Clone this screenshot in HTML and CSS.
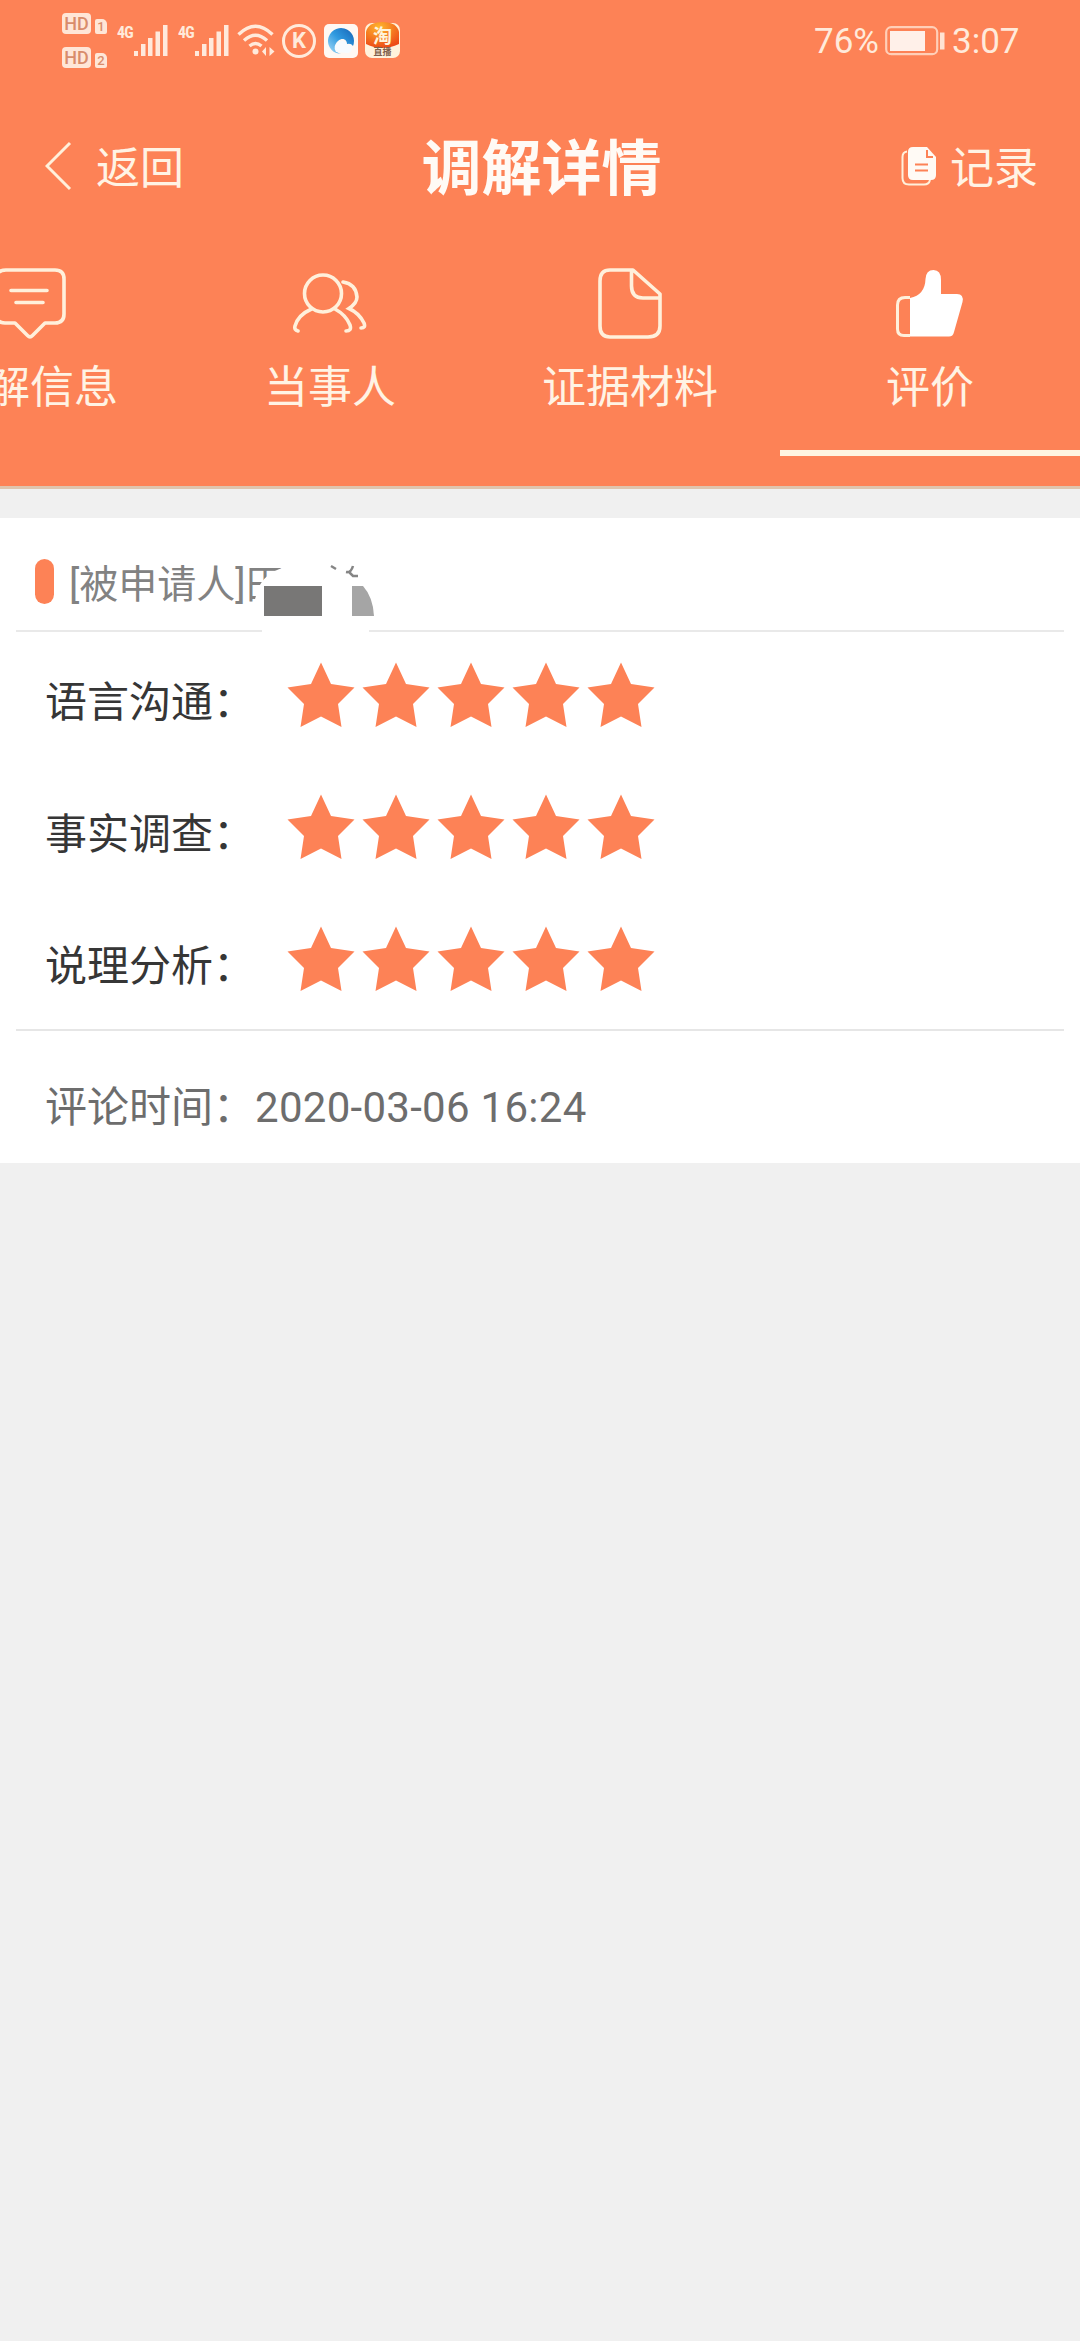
FILE: index.html
```html
<!DOCTYPE html>
<html lang="zh-CN">
<head>
<meta charset="utf-8">
<title>调解详情</title>
<link rel="stylesheet" href="styles.css">
</head>
<body>
<svg class="defs" width="0" height="0" aria-hidden="true">
  <symbol id="star" viewBox="0 0 68 66"><path d="M34 0.500 44 22 67.500 25.500 51 42 54.500 65 34 54.500 13.500 65 17 42 0.500 25.500 24 22Z"/></symbol>
  <symbol id="signal" viewBox="0 0 35 32"><path d="M0 26h4v5H0zM7 19h4.500v12H7zM14 13h4.500v18H14zM21.500 6.500h4.500v24.500h-4.500zM29 0h4.500v31H29z"/></symbol>
</svg>
<header class="header">
  <div class="status">
    <div class="hd-group">
      <div class="hd"><span class="hd-tag">HD</span><span class="sim">1</span></div>
      <div class="hd"><span class="hd-tag">HD</span><span class="sim">2</span></div>
    </div>
    <div class="net"><span class="gen">4G</span><svg class="bars"><use href="#signal"/></svg></div>
    <div class="net"><span class="gen">4G</span><svg class="bars"><use href="#signal"/></svg></div>
    <svg class="wifi" viewBox="0 0 38 32" fill="none" stroke="#ffeadb" stroke-width="3.400"><path d="M1.500 10.500Q18.500-6 35.500 10.500M7 16.500q11.500-10.500 23 0M12.500 22q6-5 12 0"/><circle cx="18.500" cy="27.500" r="3" fill="#ffeadb" stroke="none"/><path d="M29 23v9l-4-4.500zM32.500 23v9l5-4.500z" fill="#ffeadb" stroke="none"/></svg>
    <span class="k-badge">K</span>
    <svg class="app browser" viewBox="0 0 34 34"><defs><linearGradient id="bl" x1="0" y1="1" x2="1" y2="0"><stop offset="0" stop-color="#a9dcf8"/><stop offset=".5" stop-color="#2f9ae0"/><stop offset="1" stop-color="#1763b5"/></linearGradient></defs><rect width="34" height="34" rx="5" fill="#fff8f3"/><path d="M29 22A13 13 0 1 0 17 30C11 29 9 21 14 17 19 13 23 16 23 20Q27 19 29 22Z" fill="url(#bl)"/><path d="M12 28q-4-7 3-10 6-3 8 3 4-1 5 3 0 4-4 5z" fill="#f6fbff"/></svg>
    <svg class="app taobao" viewBox="0 0 35 36"><defs><radialGradient id="tb" cx=".4" cy=".2" r=".8"><stop offset="0" stop-color="#ffb62e"/><stop offset="1" stop-color="#ed4b16"/></radialGradient></defs><rect y="1" width="35" height="35" rx="7" fill="#fff2dc"/><path d="M1 22V10Q3 0 17.500 0T34 10V22Q17 30 1 22Z" fill="url(#tb)"/><text x="17.500" y="21" text-anchor="middle" class="tao">淘</text><text x="17.500" y="33" text-anchor="middle" class="tao-sub">直播</text></svg>
    <span class="percent">76%</span>
    <svg class="battery" viewBox="0 0 60 30"><rect x="1.200" y="1.200" width="51" height="27" rx="5" fill="none" stroke="#ffcfb8" stroke-width="2.200"/><rect x="5" y="5" width="35" height="20" fill="#fff0e9"/><rect x="55" y="6.500" width="4.500" height="17" fill="#ffe3d3"/></svg>
    <span class="clock">3:07</span>
  </div>
  <nav class="navbar">
    <a class="back"><svg width="27" height="50" viewBox="0 0 27 50" fill="none" stroke="#fff0db" stroke-width="3"><path d="M25 2 2 25 25 48"/></svg><span>返回</span></a>
    <h1 class="title">调解详情</h1>
    <a class="record"><svg width="36" height="40" viewBox="0 0 36 40"><path d="M6 5.500Q1.500 6 1.500 11V32Q1.500 38.500 8 38.500H23Q28 38.500 29 34" fill="none" stroke="#fff0db" stroke-width="2"/><path d="M12 1H26L35 11V29Q35 34 30 34H12Q7 34 7 29V6Q7 1 12 1Z" fill="#fffaf5"/><path d="M26 4v7h6M14 18.500h13M14 24.500h13" fill="none" stroke="#fd8256" stroke-width="2"/></svg><span>记录</span></a>
  </nav>
  <div class="tabs">
    <div class="tab"><svg class="icon" viewBox="0 0 74 74" fill="none" stroke="#fff0db" stroke-width="3.600" stroke-linejoin="round" stroke-linecap="round"><path d="M13 4H62Q71 4 71 13V48Q71 57 62 57H52L39.500 69.500Q37 72 34.500 69.500L22 57H12Q3 57 3 48V13Q3 4 13 4ZM18 24.500H54M23 36.500H50"/></svg><span>调解信息</span></div>
    <div class="tab"><svg class="icon" viewBox="0 0 74 74" fill="none" stroke="#fff0db" stroke-width="3.600" stroke-linecap="round"><circle cx="30" cy="27.500" r="18.500"/><path d="M18.500 43Q5 49 2 60Q1 64 5 65M42 43Q53 49 57 59Q59 65 53 65M50 16Q63 18 64 31Q64 37 56 42.500Q66 47 71 57Q73 62 68 62"/></svg><span>当事人</span></div>
    <div class="tab"><svg class="icon" viewBox="0 0 74 74" fill="none" stroke="#fff0db" stroke-width="3.600" stroke-linejoin="round"><path d="M40 4H17Q7 4 7 15V60Q7 71 17 71H55Q67 71 67 60V28ZM38.500 4V20Q38.500 32 50 32H67"/></svg><span>证据材料</span></div>
    <div class="tab active"><svg class="icon" viewBox="0 0 74 74"><path d="M17 32Q32 29 32.500 13Q33 4 40.500 4Q48 4 48 14V28H64Q71 28 69.500 36L61 66Q60 70.500 56 70.500H17Z" fill="#fff"/><path d="M17 31.500H12Q4.500 31.500 4.500 39V63Q4.500 69.500 11 69.500H17" fill="none" stroke="#fff0db" stroke-width="3"/></svg><span>评价</span></div>
  </div>
</header>
<main class="card">
  <div class="party"><i class="pill"></i><span>[被申请人]田</span>
    <svg class="redaction" width="130" height="85" viewBox="250 555 130 85"><path d="M253 606 258 589Q264 574 282 568H374V616H369V636H262V606Z" fill="#fff"/><path d="M264 586h58v30h-58z" fill="#787776"/><path d="M352 586h11q10 11 11 30h-22z" fill="#a5a5a5"/><path d="M331 566l5 3M353 566q-2 7-7 6M349 572l4 4H358" fill="none" stroke="#858585" stroke-width="2.500"/></svg>
  </div>
  <section class="ratings">
    <div class="rating"><span class="label">语言沟通：</span><div class="stars"><svg><use href="#star"/></svg><svg><use href="#star"/></svg><svg><use href="#star"/></svg><svg><use href="#star"/></svg><svg><use href="#star"/></svg></div></div>
    <div class="rating"><span class="label">事实调查：</span><div class="stars"><svg><use href="#star"/></svg><svg><use href="#star"/></svg><svg><use href="#star"/></svg><svg><use href="#star"/></svg><svg><use href="#star"/></svg></div></div>
    <div class="rating"><span class="label">说理分析：</span><div class="stars"><svg><use href="#star"/></svg><svg><use href="#star"/></svg><svg><use href="#star"/></svg><svg><use href="#star"/></svg><svg><use href="#star"/></svg></div></div>
  </section>
  <div class="time">评论时间：<span class="date">2020-03-06 16:24</span></div>
</main>
</body>
</html>
```
FILE: styles.css
```css
* { box-sizing: border-box; }
body {
  margin: 0;
  min-height: 2341px;
  background: #f0f0f0;
  font-family: Roboto, "Noto Sans CJK SC", sans-serif;
  overflow-x: hidden;
}
svg { display: block; flex: none; }
.defs { position: absolute; }
.header {
  height: 489px;
  background: #fd8256;
  border-bottom: 3px solid #dfc4ad;
  color: #fff3e4;
  overflow: hidden;
}

.status { display: flex; height: 82px; padding-left: 62px; color: #ffeadb; }
.hd-group { display: flex; flex-direction: column; gap: 13px; padding-top: 13px; width: 55px; }
.hd { display: flex; align-items: flex-end; gap: 4px; height: 21px; }
.hd-tag, .sim { background: #ffe6d7; color: #d98c6b; border-radius: 4px; text-align: center; font-weight: 500; }
.hd-tag { width: 29px; height: 21px; font-size: 18px; line-height: 21px; }
.sim { width: 12px; height: 15px; border-radius: 2px 5px 2px 2px; font-size: 13px; line-height: 15px; }
.net { display: flex; width: 61px; padding-top: 25px; }
.gen { width: 17px; font: bold 16px/15px "Roboto Condensed", Roboto, sans-serif; letter-spacing: -.8px; white-space: nowrap; }
.bars { width: 35px; height: 32px; fill: #ffe9dc; }
.wifi { width: 38px; height: 32px; margin: 24px 7px 0 -2px; }
.k-badge { width: 34px; height: 34px; margin: 24px 8px 0 0; border: 3px solid #ffeadb; border-radius: 50%; text-align: center; font-size: 22px; font-weight: 700; line-height: 28px; }
.browser { width: 34px; height: 34px; margin: 24px 7px 0 0; }
.taobao { width: 35px; height: 36px; margin-top: 22px; }
.tao { font: bold 19px "Noto Sans CJK SC", sans-serif; fill: #fff4dc; }
.tao-sub { font: bold 9px "Noto Sans CJK SC", sans-serif; fill: #80604c; }
.percent, .clock { font-size: 35px; line-height: 84px; }
.percent { width: 71px; margin-left: 414px; }
.battery { width: 60px; height: 30px; margin-top: 26px; }
.clock { margin-left: 7px; }

.navbar { display: grid; grid-template-columns: 1fr auto 1fr; align-items: center; height: 168px; padding: 0 42px 0 45px; font-size: 44px; line-height: 60px; }
.navbar span { padding-top: 5px; }
.back, .record { display: flex; align-items: center; }
.back { gap: 24px; }
.record { justify-content: flex-end; gap: 13px; }
.title { margin: 0; padding-top: 7px; font-size: 60px; line-height: 80px; color: #fffaf5; }

.tabs { display: grid; grid-template-columns: repeat(4, 300px); height: 206px; margin-left: -120px; font-size: 44px; line-height: 60px; }
.tab { display: flex; flex-direction: column; align-items: center; gap: 18px; padding-top: 16px; border-bottom: 6px solid transparent; white-space: nowrap; }
.icon { width: 74px; height: 74px; }
.active { border-color: #fff5e1; }

.card { height: 645px; margin-top: 29px; background: #fff; padding: 0 16px; }
.party { position: relative; display: flex; align-items: flex-start; gap: 15px; height: 114px; padding: 41px 0 0 19px; border-bottom: 2px solid #e9e9e9; color: #828282; font-size: 39px; line-height: 45px; }
.party span { margin-top: 4px; }
.pill { width: 19px; height: 45px; border-radius: 10px; background: #fd8256; }
.redaction { position: absolute; left: 234px; top: 37px; }
.ratings { height: 399px; border-bottom: 2px solid #e6e6e6; }
.rating { display: flex; height: 132px; padding: 30px 0 0 29px; }
.label { width: 242px; font-size: 42px; line-height: 81px; color: #363636; }
.stars { display: flex; gap: 7px; }
.stars svg { width: 68px; height: 66px; fill: #fd8256; }
.time { padding-left: 29px; font-size: 42px; line-height: 154px; color: #6d6d6d; white-space: nowrap; }
.date { letter-spacing: .28px; }
```
